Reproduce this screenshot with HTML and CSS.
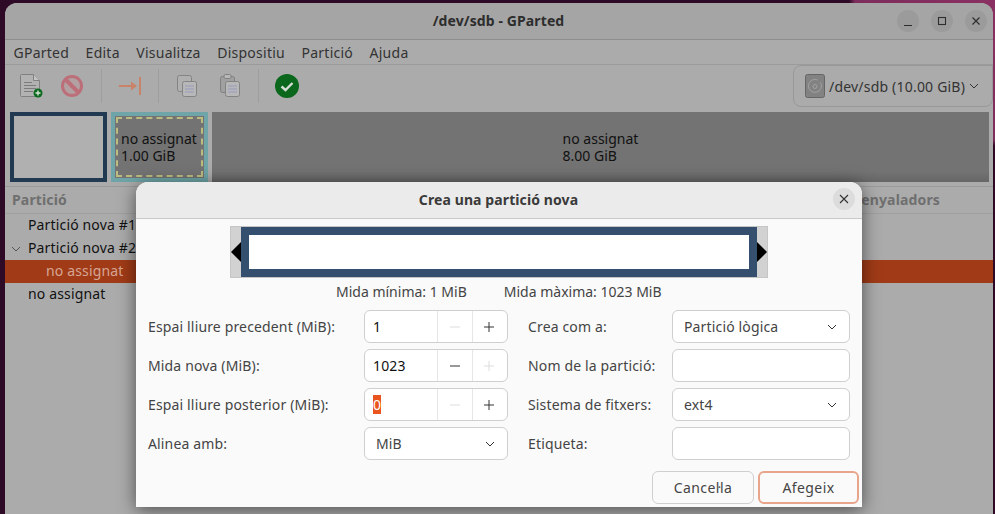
FILE: index.html
```html
<!DOCTYPE html>
<html lang="ca">
<head>
<meta charset="utf-8">
<title>/dev/sdb - GParted</title>
<link rel="stylesheet" href="styles.css">
</head>
<body>
<div class="window">
  <header class="titlebar">
    <span class="title">/dev/sdb - GParted</span>
    <div class="wm">
      <span class="wm-btn"><svg width="12" height="12" viewBox="0 0 12 12"><path d="M2 10.5h8" stroke="#2e2e2e" stroke-width="1.2"/></svg></span>
      <span class="wm-btn"><svg width="12" height="12" viewBox="0 0 12 12"><rect x="2.5" y="2.5" width="7" height="7" fill="none" stroke="#2e2e2e" stroke-width="1.1"/></svg></span>
      <span class="wm-btn"><svg width="12" height="12" viewBox="0 0 12 12"><path d="M2.5 2.5l7 7M9.5 2.5l-7 7" stroke="#2e2e2e" stroke-width="1.2"/></svg></span>
    </div>
  </header>
  <nav class="menubar">
    <span>GParted</span><span>Edita</span><span>Visualitza</span><span>Dispositiu</span><span>Partició</span><span>Ajuda</span>
  </nav>
  <div class="toolbar">
    <div class="tools">
      <svg class="tool t-new" width="24" height="26" viewBox="0 0 24 26"><path d="M1.5 1.5h12l6 6v15a1 1 0 0 1-1 1h-17a1 1 0 0 1-1-1v-20a1 1 0 0 1 1-1z" fill="#b2b2b2" stroke="#808080"/><path d="M13.5 1.5v6h6" fill="#c4c4c4" stroke="#808080"/><path d="M4 9.5h8M4 12.5h12M4 15.5h12M4 18.5h9" stroke="#7c7c7c"/><circle cx="18" cy="20" r="4.5" fill="#0c6a1e"/><path d="M15.5 20h5M18 17.5v5" stroke="#d8e6d8" stroke-width="1.4"/></svg>
      <svg class="tool t-del" width="24" height="24" viewBox="0 0 24 24"><circle cx="12" cy="12" r="9.5" fill="#b3a0a2" stroke="#bc6f78" stroke-width="3"/><path d="M5.5 5.5l13 13" stroke="#bc6f78" stroke-width="4"/></svg>
      <i class="sep s1"></i>
      <svg class="tool t-res" width="24" height="20" viewBox="0 0 24 20"><path d="M1 10h17" stroke="#c98368" stroke-width="2"/><path d="M13 5.5l6 4.5-6 4.5z" fill="#c98368"/><path d="M22 1v18" stroke="#c98368" stroke-width="2"/></svg>
      <i class="sep s2"></i>
      <svg class="tool t-copy" width="22" height="24" viewBox="0 0 22 24"><rect x="1.5" y="1.5" width="14" height="16" rx="2" fill="#b0b0b0" stroke="#838383"/><rect x="6.5" y="7.5" width="14" height="15" rx="2" fill="#b8b8b8" stroke="#838383"/><path d="M9 12h9M9 15h9M9 18h9" stroke="#9a9ac0"/></svg>
      <svg class="tool t-paste" width="22" height="24" viewBox="0 0 22 24"><rect x="1.5" y="2.5" width="14" height="16" rx="2" fill="#a0a0a0" stroke="#808080"/><rect x="5" y="0.5" width="7" height="4" rx="1.5" fill="#b8b8b8" stroke="#808080"/><rect x="6.5" y="7.5" width="14" height="15" rx="2" fill="#b8b8b8" stroke="#838383"/><path d="M9 12h9M9 15h9M9 18h9" stroke="#9a9ac0"/></svg>
      <i class="sep s3"></i>
      <svg class="tool t-ok" width="24" height="24" viewBox="0 0 24 24"><circle cx="12" cy="12" r="12" fill="#0a671c"/><path d="M6.5 12.5l4 3.5 7-7" fill="none" stroke="#d4dcd4" stroke-width="2.4"/></svg>
    </div>
    <div class="device">
      <svg width="20" height="24" viewBox="0 0 20 24"><rect x="0.5" y="0.5" width="19" height="23" rx="2" fill="#828282" stroke="#666"/><path d="M15.5 8.5a6.5 6.5 0 1 1-3-2.6" fill="none" stroke="#a2a2a2"/><circle cx="10" cy="12.5" r="2" fill="none" stroke="#a2a2a2"/></svg>
      <span>/dev/sdb (10.00 GiB)</span>
      <svg width="10" height="6" viewBox="0 0 10 6"><path d="M1 1l4 4 4-4" fill="none" stroke="#333" stroke-width="1"/></svg>
    </div>
  </div>
  <div class="map">
    <div class="part p-used"></div>
    <div class="part p-free"><div class="dashed"><span>no assignat</span><span>1.00 GiB</span></div></div>
    <div class="part p-rest"><div class="rest-label"><span>no assignat</span><span>8.00 GiB</span></div></div>
  </div>
  <div class="tree">
    <div class="tree-head"><span>Partició</span><span>Senyaladors</span></div>
    <div class="row l0">Partició nova #1</div>
    <div class="row l0"><svg class="twist" width="10" height="6" viewBox="0 0 10 6"><path d="M1 1l4 4 4-4" fill="none" stroke="#555"/></svg>Partició nova #2</div>
    <div class="row l1 selected">no assignat</div>
    <div class="row l0">no assignat</div>
  </div>
</div>

<section class="dialog">
  <header class="dlg-head">
    <span class="dlg-title">Crea una partició nova</span>
    <span class="dlg-close"><svg width="10" height="10" viewBox="0 0 10 10"><path d="M1 1l8 8M9 1l-8 8" stroke="#333" stroke-width="1.1"/></svg></span>
  </header>
  <div class="dlg-body">
    <div class="resizer">
      <svg class="arrow" width="10" height="20" viewBox="0 0 10 20"><path d="M10 0v20L0 10z" fill="#000"/></svg>
      <div class="bar"></div>
      <svg class="arrow" width="10" height="20" viewBox="0 0 10 20"><path d="M0 0v20l10-10z" fill="#000"/></svg>
    </div>
    <div class="limits"><span>Mida mínima: 1 MiB</span><span>Mida màxima: 1023 MiB</span></div>
    <div class="form">
      <label>Espai lliure precedent (MiB):</label>
      <div class="spin"><span class="val">1</span><span class="step off"><svg width="12" height="12" viewBox="0 0 12 12"><path d="M1 6h10" stroke="#ddd"/></svg></span><span class="step"><svg width="12" height="12" viewBox="0 0 12 12"><path d="M1 6h10M6 1v10" stroke="#333"/></svg></span></div>
      <label>Crea com a:</label>
      <div class="combo"><span>Partició lògica</span><svg width="10" height="6" viewBox="0 0 10 6"><path d="M1 1l4 4 4-4" fill="none" stroke="#333"/></svg></div>

      <label>Mida nova (MiB):</label>
      <div class="spin"><span class="val">1023</span><span class="step"><svg width="12" height="12" viewBox="0 0 12 12"><path d="M1 6h10" stroke="#333"/></svg></span><span class="step off"><svg width="12" height="12" viewBox="0 0 12 12"><path d="M1 6h10M6 1v10" stroke="#ddd"/></svg></span></div>
      <label>Nom de la partició:</label>
      <div class="entry"></div>

      <label>Espai lliure posterior (MiB):</label>
      <div class="spin"><span class="val"><mark>0</mark></span><span class="step off"><svg width="12" height="12" viewBox="0 0 12 12"><path d="M1 6h10" stroke="#ddd"/></svg></span><span class="step"><svg width="12" height="12" viewBox="0 0 12 12"><path d="M1 6h10M6 1v10" stroke="#333"/></svg></span></div>
      <label>Sistema de fitxers:</label>
      <div class="combo"><span>ext4</span><svg width="10" height="6" viewBox="0 0 10 6"><path d="M1 1l4 4 4-4" fill="none" stroke="#333"/></svg></div>

      <label>Alinea amb:</label>
      <div class="combo"><span>MiB</span><svg width="10" height="6" viewBox="0 0 10 6"><path d="M1 1l4 4 4-4" fill="none" stroke="#333"/></svg></div>
      <label>Etiqueta:</label>
      <div class="entry"></div>
    </div>
    <div class="actions">
      <button class="btn" type="button">Cancel·la</button>
      <button class="btn primary" type="button">Afegeix</button>
    </div>
  </div>
</section>
</body>
</html>
```

FILE: styles.css
```css
* { box-sizing: border-box; }
html, body { margin: 0; height: 514px; overflow: hidden; }
body {
  position: relative;
  background: radial-gradient(circle at 100% 0, #8a3062 0, #7d2d5c 140px, transparent 146px), #2e0a26;
  font-family: "Noto Sans", sans-serif;
  font-size: 14px;
  letter-spacing: .15px;
  color: #3a3a3a;
  padding: 3px 2px 0 5px;
}
.window {
  height: 530px;
  background: #ababab;
  border-radius: 12px 12px 0 0;
  display: flex;
  flex-direction: column;
  overflow: hidden;
}
.titlebar {
  height: 37px;
  flex: none;
  background: #a5a5a5;
  border-bottom: 1px solid #8e8e8e;
  display: flex;
  align-items: center;
  justify-content: center;
  position: relative;
}
.title { font-weight: 700; font-size: 14px; color: #2d2d2d; padding-bottom: 1px; margin-left: -1px; letter-spacing: .1px; }
.wm { position: absolute; right: 6px; top: 7px; display: flex; gap: 12px; }
.wm-btn {
  width: 22px; height: 22px; border-radius: 50%; background: #9b9b9b;
  display: flex; align-items: center; justify-content: center;
}
.menubar {
  height: 25px;
  flex: none;
  display: flex;
  gap: 16.5px;
  padding: 0 8.5px;
  align-items: center;
  border-bottom: 1px solid #9b9b9b;
  color: #333;
  letter-spacing: .25px;
}
.toolbar {
  height: 47px;
  flex: none;
  display: flex;
  justify-content: space-between;
  align-items: flex-start;
}
.tools { display: flex; align-items: center; height: 42px; }
.tool { flex: none; display: block; }
.t-new { margin-left: 15px; }
.t-del { margin-left: 16px; }
.s1 { margin-left: 17px; }
.t-res { margin-left: 16px; }
.s2 { margin-left: 16px; }
.t-copy { margin-left: 17px; }
.t-paste { margin-left: 21px; }
.s3 { margin-left: 17px; }
.t-ok { margin-left: 16px; }
.sep { width: 1px; height: 34px; background: #9e9e9e; flex: none; }
.device {
  width: 200px;
  height: 42px;
  border: 1px solid #989898;
  border-radius: 8px 0 8px 8px;
  display: flex;
  align-items: center;
  gap: 4px;
  padding-left: 11px;
  color: #333;
  white-space: nowrap;
  letter-spacing: .2px;
}
.map { height: 70px; flex: none; display: flex; gap: 4px; padding-left: 5px; padding-right: 4px; }
.part { height: 70px; flex: none; font-size: 14px; line-height: 17px; color: #111; letter-spacing: 0; }
.p-used { width: 97px; border: 4px solid #213a52; background: #b0b0b0; }
.p-free { width: 97px; border: 4px solid #6fa5a8; background: #737373; padding: 1px; }
.dashed {
  height: 100%;
  border: 2px dashed #bcbc80;
  padding: 11px 2px 0 3px;
  display: flex; flex-direction: column; white-space: nowrap;
}
.p-rest {
  flex: 1;
  background: linear-gradient(#737373 85%, #666);
  display: flex; align-items: center; justify-content: center;
}
.rest-label { display: flex; flex-direction: column; }
.tree { flex: 1; margin-top: 4px; background: #ababab; border-top: 1px solid #999; }
.tree-head {
  height: 27px;
  display: flex;
  justify-content: space-between;
  padding: 0 53px 2px 7px;
  align-items: center;
  font-weight: 700;
  color: #6f6f6f;
  border-bottom: 1px solid #a0a0a0;
}
.row { height: 23px; line-height: 21px; color: #111; position: relative; white-space: nowrap; }
.l0 { padding-left: 23px; }
.l1 { padding-left: 41px; }
.selected { background: #a13b17; color: #d6a594; }
.twist { position: absolute; left: 6px; top: 9px; }

.dialog {
  position: absolute;
  left: 136px;
  top: 182px;
  width: 726px;
  height: 325px;
  background: #fafafa;
  border-radius: 12px 12px 0 0;
  box-shadow: 0 3px 18px rgba(0,0,0,.55);
  display: flex;
  flex-direction: column;
}
.dlg-head {
  height: 37px;
  flex: none;
  background: #ebebeb;
  border-bottom: 1px solid #c9c9c9;
  border-radius: 12px 12px 0 0;
  display: flex;
  align-items: center;
  justify-content: center;
  position: relative;
}
.dlg-title { font-weight: 700; color: #3a3a3a; font-size: 14px; padding-bottom: 2px; margin-left: -1px; letter-spacing: .1px; }
.dlg-close {
  position: absolute; right: 7px; top: 6px; width: 22px; height: 22px;
  border-radius: 50%; background: #dcdcdc;
  display: flex; align-items: center; justify-content: center;
}
.dlg-body { flex: 1; padding: 7px 2px 0 12px; display: flex; flex-direction: column; }
.resizer {
  width: 538px; height: 52px; margin-left: 82px;
  background: #d2d2d2; border: 1px solid #c6c6c6;
  display: flex; align-items: center;
}
.bar { flex: 1; height: 50px; border: 8px solid #34506e; background: #fff; }
.arrow { flex: none; }
.limits {
  display: flex; gap: 37px; margin-left: 188px; height: 28px; align-items: center;
  color: #444; padding-bottom: 2px; letter-spacing: 0;
}
.form {
  margin-top: 4px;
  display: grid;
  grid-template-columns: 216px 144px 164px 178px;
  grid-auto-rows: 33px;
  row-gap: 6px;
  align-items: center;
}
.form label { color: #444; white-space: nowrap; }
.form > :nth-child(4n+3) { margin-left: 20px; }
.spin, .combo, .entry {
  height: 33px; background: #fff; border: 1px solid #cfcfcf; border-radius: 6px;
}
.spin { display: flex; align-items: stretch; }
.val { width: 72px; padding-left: 8px; line-height: 31px; color: #111; }
mark { background: #e9541f; color: #fff; }
.step { width: 35px; border-left: 1px solid #e6e6e6; display: flex; align-items: center; justify-content: center; }
.step:last-child { padding-right: 2px; }
.combo {
  display: flex; align-items: center; justify-content: space-between;
  padding: 0 12px 0 11px; color: #444;
}
.actions { display: flex; justify-content: flex-end; gap: 4px; margin-top: 11px; padding-right: 1px; }
.btn {
  height: 33px; font: inherit; color: #444; background: #fafafa;
  border: 1px solid #cfcfcf; border-radius: 6px; padding: 0;
  width: 102px; letter-spacing: .4px;
}
.primary { width: 101px; border: 2px solid #e9a58b; }
```
